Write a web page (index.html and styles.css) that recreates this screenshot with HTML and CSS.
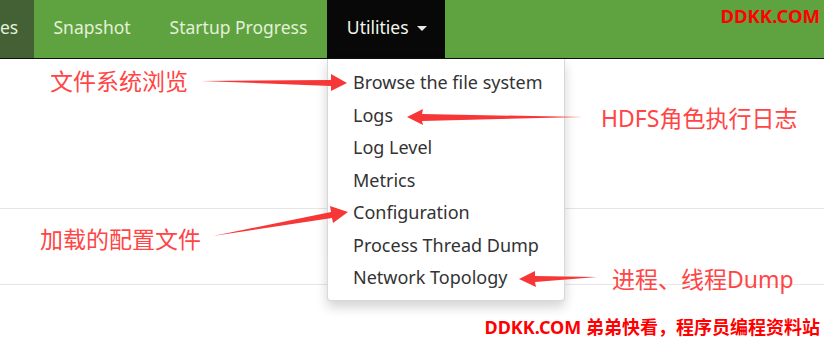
FILE: index.html
```html
<!DOCTYPE html>
<html lang="en">
<head>
    <meta charset="UTF-8">
    <title>Utilities</title>
    <link rel="stylesheet" href="styles.css">
</head>
<body>
    <nav class="navbar">
        <a class="nav-item nav-prev">es</a>
        <a class="nav-item">Snapshot</a>
        <a class="nav-item">Startup Progress</a>
        <a class="nav-item nav-active">Utilities <span class="caret"></span></a>
        <span class="brand-mark">DDKK.COM</span>
    </nav>

    <main class="content">
        <section class="panel panel-top"></section>
        <section class="panel panel-mid"></section>
    </main>

    <ul class="dropdown">
        <li>Browse the file system</li>
        <li>Logs</li>
        <li>Log Level</li>
        <li>Metrics</li>
        <li>Configuration</li>
        <li>Process Thread Dump</li>
        <li>Network Topology</li>
    </ul>

    <!-- annotations -->
    <svg class="arrows" width="824" height="338" viewBox="0 0 824 338">
        <polygon points="201,81 331,80 331,74 347,83 331,91 331,86"/>
        <polygon points="583,117 422,114 423,109 407,117 423,125 422,121"/>
        <polygon points="213,236 331,212 330,206 348,212 333,223 332,218"/>
        <polygon points="597,277 535,276 535,271 519,279 536,287 535,282"/>
    </svg>
    <span class="note note-browse">文件系统浏览</span>
    <span class="note note-logs">HDFS角色执行日志</span>
    <span class="note note-conf">加载的配置文件</span>
    <span class="note note-dump">进程、线程Dump</span>
    <span class="footer-mark">DDKK.COM 弟弟快看，程序员编程资料站</span>
</body>
</html>
```

FILE: styles.css
```css
body {
    margin: 0;
    font-family: "Noto Sans", "Noto Sans CJK SC", sans-serif;
    background-color: #fff;
    color: #333;
    width: 824px;
    height: 338px;
    overflow: hidden;
    position: relative;
}

.navbar {
    display: flex;
    align-items: stretch;
    height: 58px;
    background-color: #5fa341;
    border-bottom: 1px solid #0c120a;
}

.nav-item {
    display: flex;
    align-items: center;
    padding: 0 19.5px 4px;
    font-size: 17.5px;
    color: #e4f0d8;
}

.nav-prev {
    box-sizing: border-box;
    width: 34px;
    padding-left: 0;
    padding-right: 0;
    background-color: #436134;
}

.nav-active {
    background-color: #080808;
    color: #f2f7ea;
    padding: 0 18px 4px 20px;
}

.caret {
    display: inline-block;
    width: 0;
    height: 0;
    margin-left: 8px;
    margin-top: 2px;
    border-top: 5px solid #e8e8e8;
    border-left: 5px solid transparent;
    border-right: 5px solid transparent;
}

.brand-mark {
    margin-left: auto;
    margin-right: 4px;
    margin-top: 3px;
    font-weight: bold;
    font-size: 18.5px;
    color: #ff0000;
}

.panel-top {
    height: 149px;
    border-bottom: 1px solid #e6e6e6;
}

.panel-mid {
    height: 75px;
    border-bottom: 1px solid #e6e6e6;
}

.dropdown {
    position: absolute;
    left: 327px;
    top: 59px;
    width: 236px;
    margin: 0;
    padding: 7px 0 6px;
    list-style: none;
    background-color: #fff;
    border: 1px solid rgba(0, 0, 0, 0.15);
    border-top: none;
    border-radius: 0 0 4px 4px;
    box-shadow: 0 6px 12px rgba(0, 0, 0, 0.175);
}

.dropdown li {
    height: 32.5px;
    line-height: 32.5px;
    padding-left: 25px;
    font-size: 18px;
    color: #333;
    white-space: nowrap;
}

.arrows {
    position: absolute;
    left: 0;
    top: 0;
    fill: #f73737;
}

.note {
    position: absolute;
    font-size: 23px;
    line-height: 30px;
    color: #ff4545;
    white-space: nowrap;
}

.note-browse { left: 50px; top: 66px; }
.note-logs { left: 601px; top: 103px; }
.note-conf { left: 40px; top: 224px; }
.note-dump { left: 612px; top: 264px; }

.footer-mark {
    position: absolute;
    right: 4px;
    top: 315px;
    font-weight: bold;
    font-size: 18px;
    line-height: 24px;
    color: #ff0000;
    white-space: nowrap;
}
```
